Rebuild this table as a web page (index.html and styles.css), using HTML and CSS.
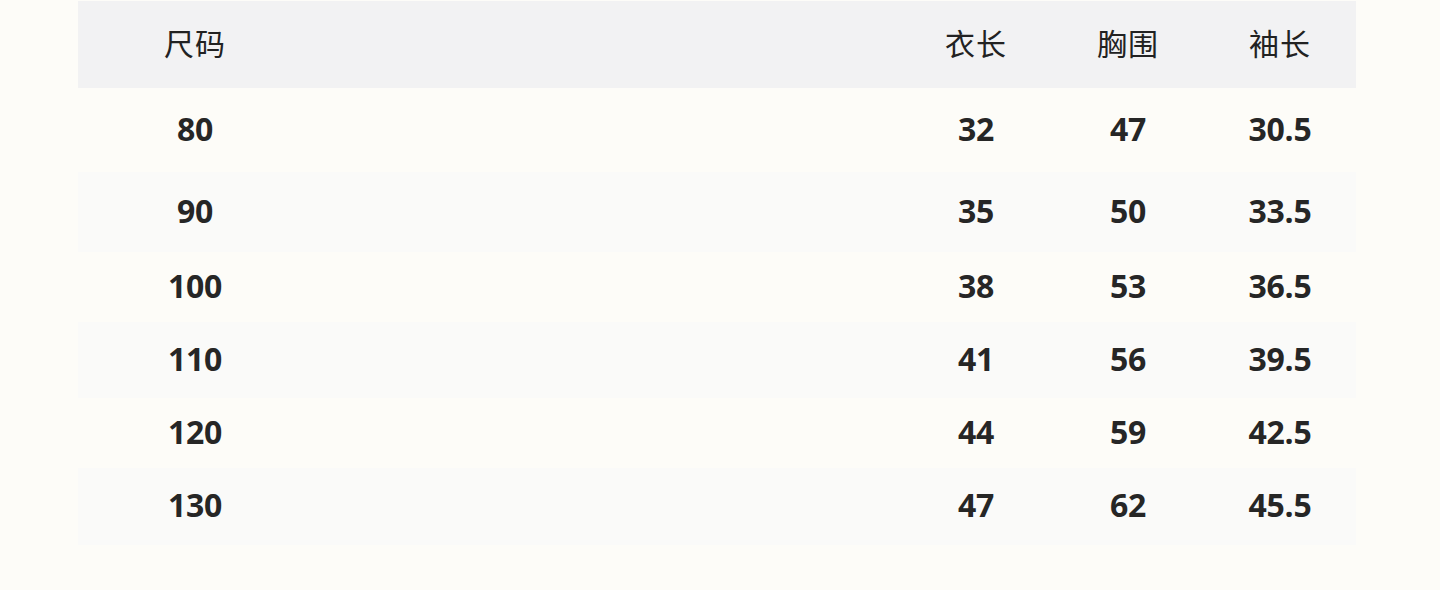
FILE: index.html
```html
<!DOCTYPE html>
<html lang="zh-CN">
<head>
<meta charset="utf-8">
<title>尺码表</title>
<link rel="stylesheet" href="styles.css">
</head>
<body>
<div class="page">
  <div class="table">
    <div class="row head">
      <div class="cell">尺码</div>
      <div class="cell spacer"></div>
      <div class="cell">衣长</div>
      <div class="cell">胸围</div>
      <div class="cell">袖长</div>
    </div>
    <div class="row">
      <div class="cell">80</div><div class="cell spacer"></div>
      <div class="cell">32</div><div class="cell">47</div><div class="cell">30.5</div>
    </div>
    <div class="row">
      <div class="cell">90</div><div class="cell spacer"></div>
      <div class="cell">35</div><div class="cell">50</div><div class="cell">33.5</div>
    </div>
    <div class="row">
      <div class="cell">100</div><div class="cell spacer"></div>
      <div class="cell">38</div><div class="cell">53</div><div class="cell">36.5</div>
    </div>
    <div class="row">
      <div class="cell">110</div><div class="cell spacer"></div>
      <div class="cell">41</div><div class="cell">56</div><div class="cell">39.5</div>
    </div>
    <div class="row">
      <div class="cell">120</div><div class="cell spacer"></div>
      <div class="cell">44</div><div class="cell">59</div><div class="cell">42.5</div>
    </div>
    <div class="row">
      <div class="cell">130</div><div class="cell spacer"></div>
      <div class="cell">47</div><div class="cell">62</div><div class="cell">45.5</div>
    </div>
  </div>
</div>
</body>
</html>
```

FILE: styles.css
```css
html, body {
  margin: 0;
  padding: 0;
  background: #fdfcf8;
}
.page {
  width: 1440px;
  height: 590px;
  padding: 1px 84px 0 78px;
  box-sizing: border-box;
}
.table {
  display: flex;
  flex-direction: column;
  color: #262626;
}
.row {
  display: grid;
  grid-template-columns: 234px 1fr 152px 152px 152px;
  align-items: center;
  font-family: "Open Sans", "Liberation Sans", sans-serif;
  font-weight: 700;
  font-size: 32px;
  letter-spacing: -0.3px;
}
.cell {
  text-align: center;
  padding-bottom: 4px;
}
.row.head {
  height: 87px;
  background: #f2f2f3;
  font-family: "Noto Sans CJK SC", "Noto Sans", sans-serif;
  font-weight: 400;
  font-size: 30px;
  letter-spacing: 1px;
  color: #222;
}
.row.head .cell {
  padding-bottom: 6px;
}
.row:nth-child(2) { height: 84px; }
.row:nth-child(3) { height: 80px; background: #fafaf9; }
.row:nth-child(4) { height: 70px; }
.row:nth-child(5) { height: 76px; background: #fafaf9; }
.row:nth-child(6) { height: 70px; }
.row:nth-child(7) { height: 77px; background: #fafaf9; }
```
